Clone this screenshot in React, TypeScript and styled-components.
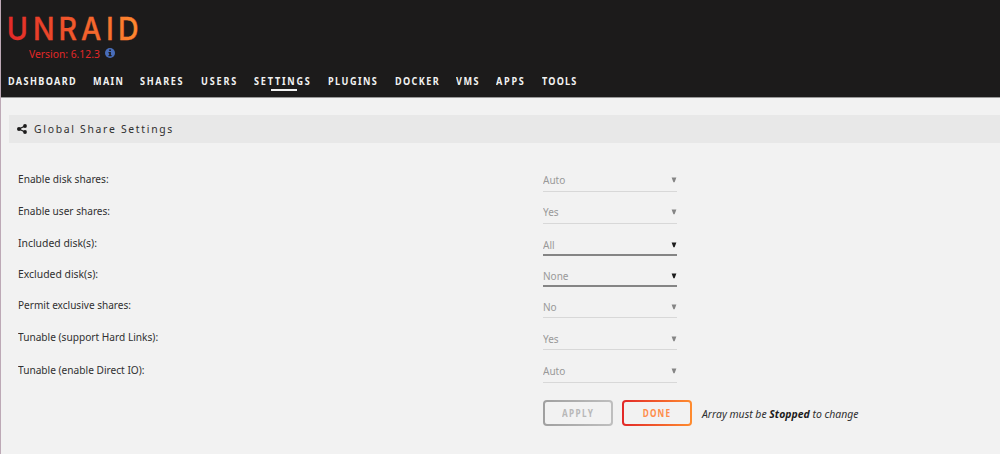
import React from "react";
import styled, { createGlobalStyle } from "styled-components";

const Global = createGlobalStyle`
  * { box-sizing: border-box; }
  body { margin: 0; background: #f2f2f2; font-family: "Noto Sans", sans-serif; font-size: 11px; color: #303030; }
`;

const Page = styled.div`
  height: 454px;
  overflow: hidden;
  border-left: 1px solid #bda9b6;
  white-space: nowrap;
`;
const Header = styled.header`
  height: 98px;
  margin-left: -1px;
  border-left: 1px solid #564956;
  background: #1c1b1b;
  border-bottom: 1px solid #999;
  padding: 8px 0 0 7px;
`;
const Logo = styled.svg`
  display: block;
  width: 140px;
  height: 37px;
  overflow: visible;
`;
const Narrow = styled.span<{ $k: number; $ls?: number; $center?: boolean }>`
  display: inline-block;
  transform: scaleX(${(p) => p.$k});
  transform-origin: ${(p) => (p.$center ? "center" : "left")};
  letter-spacing: ${(p) => p.$ls ?? 0}px;
`;
const Version = styled.div`
  display: flex;
  align-items: center;
  height: 16px;
  margin: 0 0 0 21px;
  font-size: 11px;
  color: #e22828;
`;
const VersionText = styled.span`
  width: 76px;
`;
const Nav = styled.nav`
  display: flex;
  height: 30px;
  margin-top: 13px;
`;
const NavItem = styled.a<{ $w: number; $active?: boolean }>`
  display: flex;
  flex-direction: column;
  align-items: flex-start;
  width: ${(p) => p.$w}px;
  flex: none;
  line-height: 15px;
  font-size: 9.9px;
  font-weight: 700;
  color: #f2f2f2;
  &::after {
    content: "";
    display: ${(p) => (p.$active ? "block" : "none")};
    width: 26px;
    height: 2px;
    margin: 0 0 0 16.5px;
    background: #f2f2f2;
  }
`;
const Title = styled.h1`
  display: flex;
  align-items: center;
  gap: 7px;
  height: 28px;
  margin: 17px 0 20px 8px;
  padding: 0 0 1px 8px;
  background: #e8e8e8;
  font-size: 11.3px;
  font-weight: 400;
`;
const Row = styled.div<{ $h: number }>`
  display: grid;
  grid-template-columns: 525px 134px;
  height: ${(p) => p.$h}px;
  padding-left: 17px;
  align-items: end;
`;
const Label = styled.label`
  height: 21px;
  line-height: 16px;
`;
const Select = styled.div<{ $on?: boolean; $h: number }>`
  display: flex;
  justify-content: space-between;
  height: ${(p) => p.$h}px;
  padding-left: 0.4px;
  line-height: 16px;
  color: #999;
  border-bottom: ${(p) => (p.$on ? "2px solid #858585" : "1px solid #d8d8d8")};
`;
const Arrow = styled.svg<{ $on?: boolean }>`
  width: 6px;
  height: 6px;
  margin-top: 5px;
  fill: ${(p) => (p.$on ? "#1c1c1c" : "#858585")};
`;
const Actions = styled.div`
  display: flex;
  align-items: center;
  gap: 9px;
  margin: 17px 0 0 542px;
`;
const Button = styled.button<{ $from: string; $to: string; $ink: string }>`
  width: 70px;
  height: 26px;
  padding: 0;
  border: 2px solid transparent;
  border-radius: 4px;
  background: linear-gradient(#f2f2f2, #f2f2f2) padding-box,
    linear-gradient(90deg, ${(p) => p.$from}, ${(p) => p.$to}) border-box;
  color: ${(p) => p.$ink};
  font: 700 9.8px "Noto Sans", sans-serif;
`;
const Note = styled.em`
  padding-left: 0.5px;
  b { color: #1c1b1b; }
`;

const nav: [string, number, number][] = [
  ["DASHBOARD", 85, 1.5], ["MAIN", 47, 1.5], ["SHARES", 61, 1.8], ["USERS", 53, 2], ["SETTINGS", 74, 1.95],
  ["PLUGINS", 67, 1.6], ["DOCKER", 61, 1.5], ["VMS", 40, 1.6], ["APPS", 46, 1.9], ["TOOLS", 50, 1.3],
];
const rows: { label: string; value: string; h: number; on?: boolean; k: number; sh: number }[] = [
  { label: "Enable disk shares:", value: "Auto", h: 29, k: 0.922, sh: 20 },
  { label: "Enable user shares:", value: "Yes", h: 32, k: 0.917, sh: 20 },
  { label: "Included disk(s):", value: "All", h: 32, on: true, k: 0.945, sh: 19 },
  { label: "Excluded disk(s):", value: "None", h: 31, on: true, k: 0.945, sh: 19 },
  { label: "Permit exclusive shares:", value: "No", h: 31, k: 0.914, sh: 19 },
  { label: "Tunable (support Hard Links):", value: "Yes", h: 32, k: 0.922, sh: 19 },
  { label: "Tunable (enable Direct IO):", value: "Auto", h: 33, k: 0.922, sh: 20 },
];

export default function App() {
  return (
    <Page>
      <Global />
      <Header>
        <Logo viewBox="0 0 140 37">
          <defs>
            <linearGradient id="brand" gradientUnits="userSpaceOnUse" x1="0" y1="32" x2="144" y2="10">
              <stop offset="0" stopColor="#e22828" />
              <stop offset="1" stopColor="#ff8c2f" />
            </linearGradient>
          </defs>
          <text transform="scale(0.93 1)" x="-1.3 27 54.2 78.6 105.4 118.2" y="32.2" fill="url(#brand)" fontFamily="Inter, sans-serif" fontSize="30.7" fontWeight="500" stroke="url(#brand)" strokeWidth="0.3">UNRAID</text>
        </Logo>
        <Version>
          <VersionText><Narrow $k={0.937}>Version: 6.12.3</Narrow></VersionText>
          <svg width="10" height="10" viewBox="0 0 10 10">
            <circle cx="5" cy="5" r="5" fill="#486dba" />
            <path d="M4.2 1.4h1.7v1.5H4.2zM3.5 4h2.4v3h.7v1.2H3.5V7h.7V5.2h-.7z" fill="#1c1b1b" />
          </svg>
        </Version>
        <Nav>
          {nav.map(([name, w, ls]) => (
            <NavItem key={name} $w={w} $active={name === "SETTINGS"}>
              <Narrow $k={0.92} $ls={ls}>{name}</Narrow>
            </NavItem>
          ))}
        </Nav>
      </Header>
      <Title>
        <svg width="10" height="10" viewBox="0 0 10 10">
          <path d="M8 2 2 5l6 3" fill="none" stroke="#1c1b1b" strokeWidth="1.3" />
          <g fill="#1c1b1b"><circle cx="8" cy="2" r="1.9" /><circle cx="2" cy="5" r="2" /><circle cx="8" cy="8" r="1.9" /></g>
        </svg>
        <Narrow $k={0.92} $ls={1.85}>Global Share Settings</Narrow>
      </Title>
      {rows.map((r) => (
        <Row key={r.label} $h={r.h}>
          <Label><Narrow $k={r.k}>{r.label}</Narrow></Label>
          <Select $on={r.on} $h={r.sh}>
            <Narrow $k={0.91}>{r.value}</Narrow>
            <Arrow $on={r.on} viewBox="0 0 6 6"><path d="M.6 .4h4.8L3.6 5.2H2.4z" /></Arrow>
          </Select>
        </Row>
      ))}
      <Actions>
        <Button $from="#a0a0a0" $to="#bfbfbf" $ink="#b8b8b8"><Narrow $k={0.84} $ls={1.6} $center>APPLY</Narrow></Button>
        <Button $from="#e22828" $to="#ff8c2f" $ink="#ff8c4a"><Narrow $k={0.84} $ls={1.4} $center>DONE</Narrow></Button>
        <Note><Narrow $k={0.949}>Array must be <b>Stopped</b> to change</Narrow></Note>
      </Actions>
    </Page>
  );
}
